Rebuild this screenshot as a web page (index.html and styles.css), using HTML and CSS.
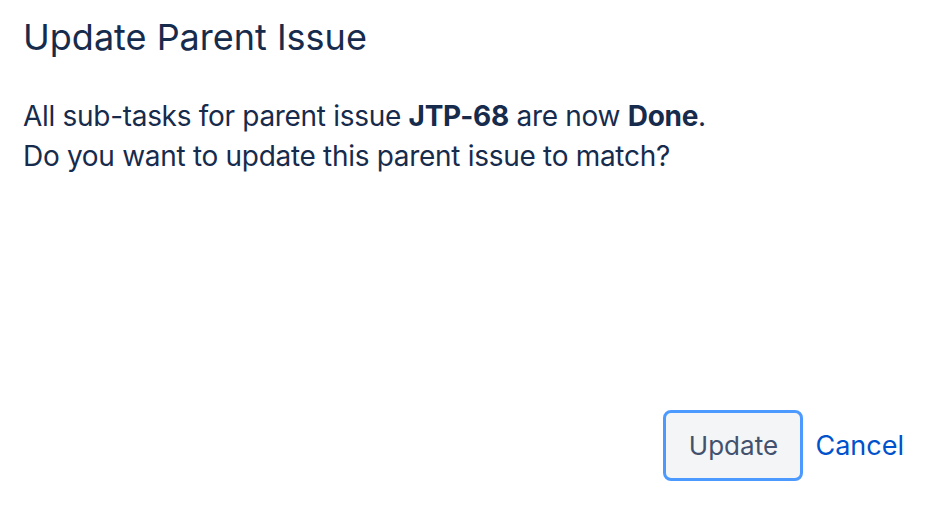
FILE: index.html
```html
<!DOCTYPE html>
<html lang="en">
<head>
<meta charset="utf-8">
<title>Update Parent Issue</title>
<link rel="stylesheet" href="styles.css">
</head>
<body>
<div class="dialog">
  <h1 class="title">Update Parent Issue</h1>
  <div class="body">
    <p class="text">All sub-tasks for parent issue <strong>JTP-68</strong> are now <strong>Done</strong>.<br>Do you want to update this parent issue to match?</p>
  </div>
  <div class="footer">
    <button class="btn" type="button">Update</button>
    <a class="link" href="#">Cancel</a>
  </div>
</div>
</body>
</html>
```
FILE: styles.css
```css
html, body {
  margin: 0;
  padding: 0;
  background: #ffffff;
}
body {
  width: 952px;
  height: 506px;
  overflow: hidden;
  font-family: Inter, "Noto Sans", sans-serif;
  color: #172b4d;
}
.dialog {
  display: flex;
  flex-direction: column;
  height: 506px;
  box-sizing: border-box;
  padding: 13px 48px 25px 23px;
}
.title {
  margin: 0;
  font-size: 36px;
  font-weight: 400;
  line-height: 48px;
  color: #172b4d;
}
.body {
  flex: 1;
  padding-top: 35px;
}
.text {
  margin: 0;
  font-size: 28px;
  line-height: 40px;
  letter-spacing: -0.3px;
}
.text strong {
  font-weight: 700;
}
.footer {
  display: flex;
  justify-content: flex-end;
  align-items: center;
  gap: 12px;
}
.btn {
  font-family: inherit;
  font-size: 26px;
  color: #42526e;
  background: #f4f5f7;
  border: 3px solid #4c9aff;
  border-radius: 8px;
  width: 140px;
  height: 71px;
  padding: 0;
}
.link {
  font-size: 27px;
  color: #0052cc;
  text-decoration: none;
}
```
